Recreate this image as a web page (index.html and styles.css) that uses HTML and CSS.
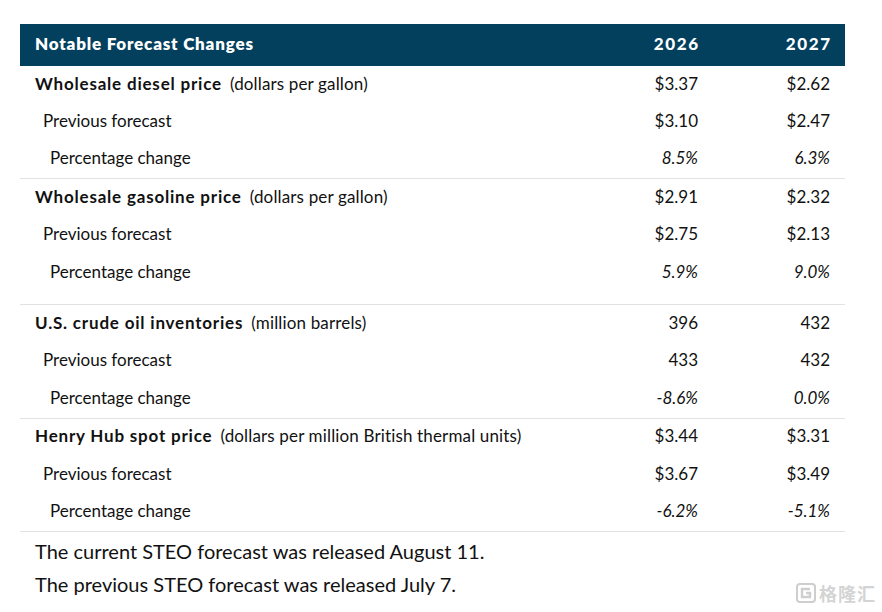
FILE: index.html
```html
<!DOCTYPE html>
<html lang="en">
<head>
<meta charset="utf-8">
<title>Notable Forecast Changes</title>
<link rel="stylesheet" href="styles.css">
</head>
<body>
<div class="page">
  <div class="table">
    <div class="row head">
      <div class="label">Notable Forecast Changes</div>
      <div class="num year">2026</div>
      <div class="num year">2027</div>
    </div>

    <div class="group">
      <div class="row">
        <div class="label"><b>Wholesale diesel price</b><span class="unit">(dollars per gallon)</span></div>
        <div class="num">$3.37</div>
        <div class="num">$2.62</div>
      </div>
      <div class="row">
        <div class="label prev">Previous forecast</div>
        <div class="num">$3.10</div>
        <div class="num">$2.47</div>
      </div>
      <div class="row">
        <div class="label pct">Percentage change</div>
        <div class="num it">8.5%</div>
        <div class="num it">6.3%</div>
      </div>
    </div>

    <div class="group tall">
      <div class="row">
        <div class="label"><b>Wholesale gasoline price</b><span class="unit">(dollars per gallon)</span></div>
        <div class="num">$2.91</div>
        <div class="num">$2.32</div>
      </div>
      <div class="row">
        <div class="label prev">Previous forecast</div>
        <div class="num">$2.75</div>
        <div class="num">$2.13</div>
      </div>
      <div class="row">
        <div class="label pct">Percentage change</div>
        <div class="num it">5.9%</div>
        <div class="num it">9.0%</div>
      </div>
    </div>

    <div class="group">
      <div class="row">
        <div class="label"><b>U.S. crude oil inventories</b><span class="unit">(million barrels)</span></div>
        <div class="num">396</div>
        <div class="num">432</div>
      </div>
      <div class="row">
        <div class="label prev">Previous forecast</div>
        <div class="num">433</div>
        <div class="num">432</div>
      </div>
      <div class="row">
        <div class="label pct">Percentage change</div>
        <div class="num it">-8.6%</div>
        <div class="num it">0.0%</div>
      </div>
    </div>

    <div class="group">
      <div class="row">
        <div class="label"><b>Henry Hub spot price</b><span class="unit">(dollars per million British thermal units)</span></div>
        <div class="num">$3.44</div>
        <div class="num">$3.31</div>
      </div>
      <div class="row">
        <div class="label prev">Previous forecast</div>
        <div class="num">$3.67</div>
        <div class="num">$3.49</div>
      </div>
      <div class="row">
        <div class="label pct">Percentage change</div>
        <div class="num it">-6.2%</div>
        <div class="num it">-5.1%</div>
      </div>
    </div>
  </div>

  <div class="notes">
    <p>The current STEO forecast was released August 11.</p>
    <p>The previous STEO forecast was released July 7.</p>
  </div>
</div>

<div class="watermark">
  <svg class="wm-logo" width="20" height="20" viewBox="0 0 20 20" aria-hidden="true">
    <rect x="1" y="1" width="18" height="18" rx="3" fill="none" stroke="#c9c9c9" stroke-width="2"/>
    <path d="M14 6H6v8h8v-4h-4" fill="none" stroke="#c9c9c9" stroke-width="2.4"/>
  </svg>
  <span class="wm-text">格隆汇</span>
</div>
</body>
</html>
```

FILE: styles.css
```css
html, body {
  margin: 0;
  padding: 0;
  background: #ffffff;
}

body {
  font-family: Lato, "Noto Sans", "Noto Sans CJK SC", sans-serif;
  color: #111111;
}

.page {
  padding: 24px 37px 0 20px;
}

.table {
  width: 825px;
}

.row {
  display: grid;
  grid-template-columns: 1fr 130px 132px;
  align-items: center;
  box-sizing: border-box;
  height: 37.4px;
  padding: 0 15px 3px;
  font-size: 17px;
}

.row.head {
  height: 42px;
  padding-bottom: 4px;
  background: #02405e;
  color: #ffffff;
  font-weight: 800;
  font-size: 17px;
  letter-spacing: 0.8px;
}

.row.head .year {
  font-weight: 900;
  letter-spacing: 1.6px;
  margin-right: -1.6px;
}

.num {
  text-align: right;
}

.it {
  font-style: italic;
}

.label b {
  font-weight: 700;
  letter-spacing: 0.8px;
}

.unit {
  margin-left: 8px;
  letter-spacing: 0.15px;
}

.prev {
  padding-left: 8px;
}

.pct {
  padding-left: 15px;
}

.group {
  border-bottom: 1px solid #e2e2e2;
}

.group.tall {
  padding-bottom: 13px;
}

.notes {
  padding: 3px 0 0 15px;
  font-size: 20px;
}

.notes p {
  margin: 0;
  line-height: 33px;
}

.watermark {
  position: absolute;
  right: 6px;
  bottom: 6px;
  display: flex;
  align-items: center;
  gap: 3px;
  opacity: 0.9;
}

.wm-text {
  font-family: "Noto Sans CJK SC", sans-serif;
  font-size: 18px;
  font-weight: 700;
  color: #d0d0d0;
  letter-spacing: 1px;
}
```
